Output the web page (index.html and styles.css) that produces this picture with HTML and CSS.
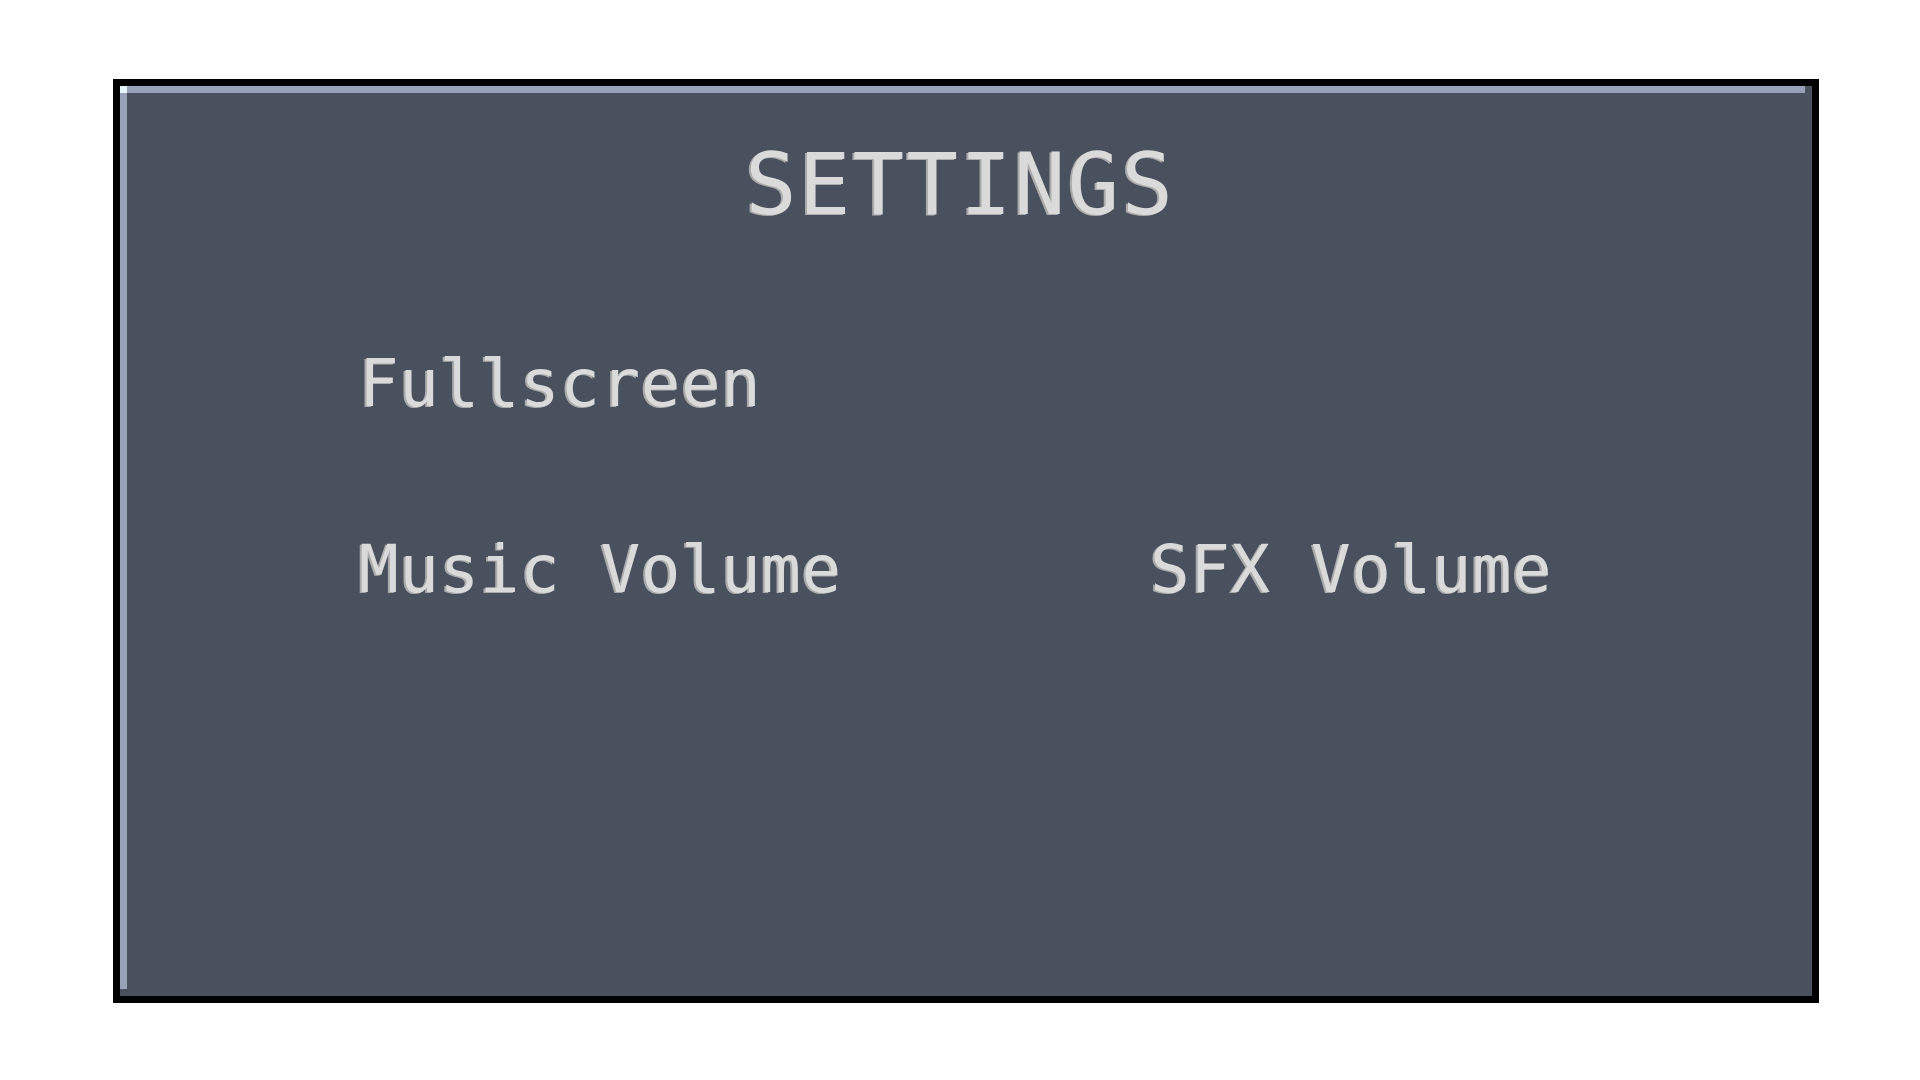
FILE: index.html
```html
<!DOCTYPE html>
<html lang="en">
<head>
<meta charset="utf-8">
<title>Settings</title>
<link rel="stylesheet" href="styles.css">
</head>
<body>
<div class="stage">
  <section class="panel">
    <span class="corner"></span>
    <h1 class="title">SETTINGS</h1>
    <div class="options">
      <div class="option">Fullscreen</div>
      <div class="option"></div>
      <div class="option">Music Volume</div>
      <div class="option">SFX Volume</div>
    </div>
  </section>
</div>
</body>
</html>
```
FILE: styles.css
```css
html, body {
  margin: 0;
  padding: 0;
  background: #ffffff;
}

.stage {
  width: 1920px;
  height: 1080px;
  padding: 79px 0 0 113px;
  box-sizing: border-box;
}

.panel {
  position: relative;
  width: 1706px;
  height: 924px;
  box-sizing: border-box;
  border: 7px solid #000000;
  background: #4a515e;
  padding: 55px 0 0 239px;
  font-family: "DejaVu Sans Mono", "Liberation Mono", monospace;
  color: #dadada;
}

.panel::before {
  content: "";
  position: absolute;
  left: 0;
  top: 0;
  width: calc(100% - 7px);
  height: 7px;
  background: #97a2b9;
}

.panel::after {
  content: "";
  position: absolute;
  left: 0;
  top: 0;
  width: 7px;
  height: calc(100% - 7px);
  background: #97a2b9;
}

.corner {
  position: absolute;
  left: 0;
  top: 0;
  width: 7px;
  height: 7px;
  background: #e2f6fc;
  z-index: 1;
}

.title {
  margin: 0 0 124px -239px;
  font-size: 86px;
  line-height: 86px;
  font-weight: normal;
  text-align: center;
  letter-spacing: 2px;
  text-shadow: -2px 1px 0 #aaaaaa;
  padding-right: 12px;
}

.options {
  display: grid;
  grid-template-columns: 791px 1fr;
  row-gap: 120px;
}

.option {
  font-size: 66px;
  line-height: 66px;
  height: 66px;
  white-space: pre;
  letter-spacing: 0.5px;
  text-shadow: -2px 1px 0 #aaaaaa;
}
```
